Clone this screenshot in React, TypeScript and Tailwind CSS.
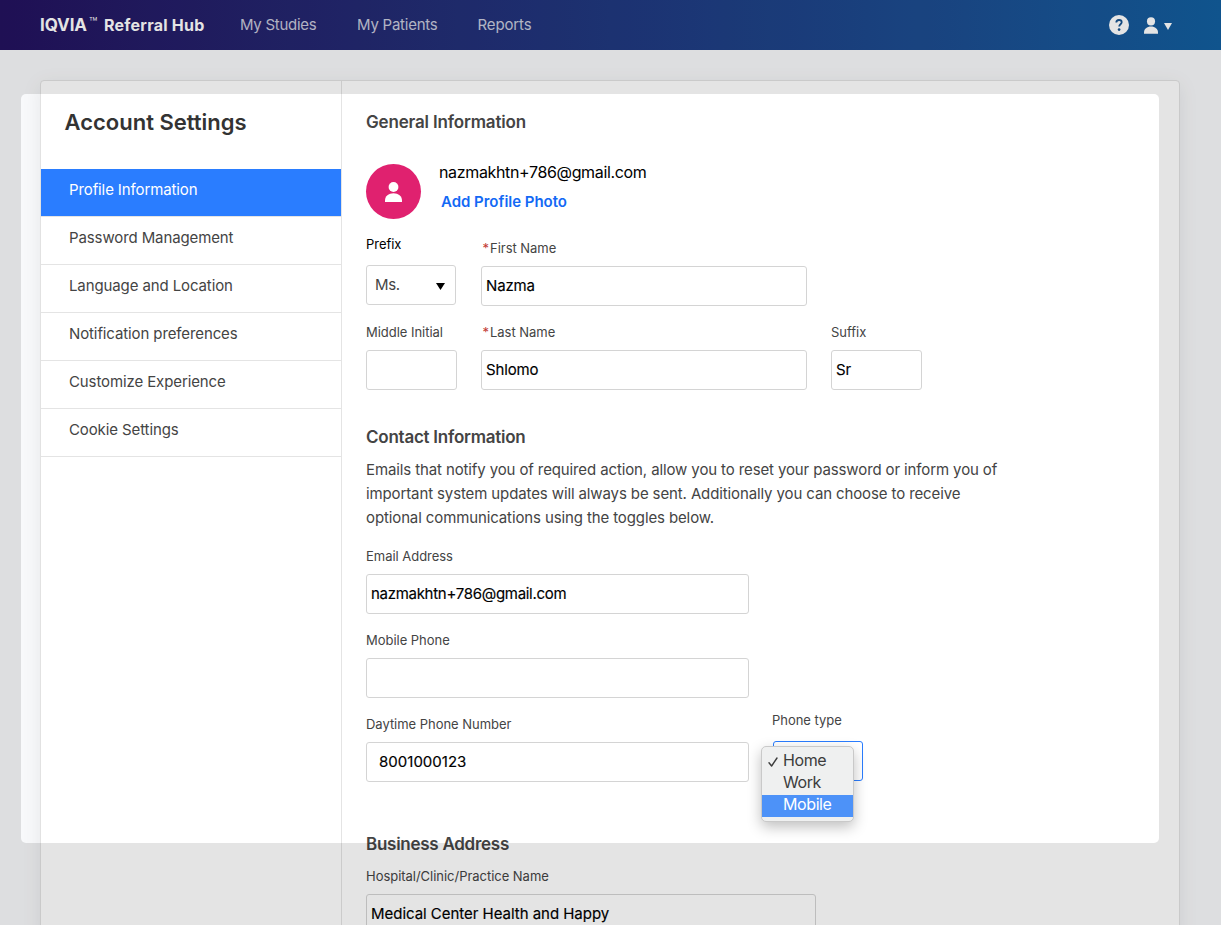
import React from "react";

const navLinks = [
  { label: "My Studies", style: "ml-[35.5px] tracking-[-0.265px]" },
  { label: "My Patients", style: "ml-[40.5px] tracking-[-0.236px]" },
  { label: "Reports", style: "ml-[40px] tracking-[-0.13px]" },
];

const menu = [
  { label: "Profile Information", active: true },
  { label: "Password Management" },
  { label: "Language and Location" },
  { label: "Notification preferences" },
  { label: "Customize Experience" },
  { label: "Cookie Settings" },
];

function PersonIcon({ className }: { className: string }) {
  return (
    <svg viewBox="0 0 17 20" className={className} fill="currentColor" aria-hidden="true">
      <circle cx="8.5" cy="5" r="4.9" />
      <path d="M0 20v-1.6C0 14.300 3.600 11.200 8.500 11.200s8.500 3.100 8.500 7.200V20z" />
    </svg>
  );
}

function Caret({ className }: { className: string }) {
  return (
    <svg viewBox="0 0 8 7" preserveAspectRatio="none" className={className} fill="currentColor" aria-hidden="true">
      <path d="M0 0h8L4 7z" />
    </svg>
  );
}

function Label({ children, required, className = "" }: { children: React.ReactNode; required?: boolean; className?: string }) {
  return (
    <div className={`flex h-[19px] items-center whitespace-nowrap text-[13px] leading-[19px] tracking-[-0.03px] text-[#444] ${className}`}>
      {required && <span className="w-[9px] pl-[1.5px] text-[13px] text-[#c23934]">*</span>}
      <span>{children}</span>
    </div>
  );
}

function Field({
  label,
  value = "",
  required,
  className = "",
  inputClass = "pl-1 tracking-[-0.15px]",
}: {
  label: string;
  value?: string;
  required?: boolean;
  className?: string;
  inputClass?: string;
}) {
  return (
    <div className={`flex shrink-0 flex-col gap-2 ${className}`}>
      <Label required={required}>{label}</Label>
      <div className={`flex h-10 items-center whitespace-nowrap rounded-[3px] border border-[#d4d4d4] text-[15px] leading-5 text-black [-webkit-text-stroke:0.15px_black] ${inputClass}`}>
        {value}
      </div>
    </div>
  );
}

function Heading({ children, className }: { children: React.ReactNode; className: string }) {
  return <h2 className={`whitespace-nowrap text-[17px] font-semibold text-[#444] ${className}`}>{children}</h2>;
}

export default function App() {
  return (
    <div className="relative flex h-[925px] w-[1221px] flex-col overflow-hidden bg-[#f8f9fb] font-['Inter','Liberation_Sans',sans-serif]">
      <header className="flex h-[50px] shrink-0 items-center bg-linear-to-r from-[#23125f] via-[#20387f] to-[#125e9e] pl-10 pr-[49px] text-white">
        <div className="flex items-center whitespace-nowrap font-bold leading-5">
          <span className="text-[17px] tracking-[-0.1px]">IQVIA</span>
          <span className="ml-[2px] flex h-5 w-[15px] items-start text-[14px] font-light leading-[16px]">™</span>
          <span className="text-[16px] tracking-[0.23px]">Referral Hub</span>
        </div>
        <nav className="flex items-center whitespace-nowrap text-[15px] text-white/75">
          {navLinks.map((l) => (
            <span key={l.label} className={l.style}>{l.label}</span>
          ))}
        </nav>
        <div className="ml-auto flex items-center">
          <svg viewBox="0 0 20 20" className="h-5 w-5" aria-hidden="true">
            <circle cx="10" cy="10" r="10" fill="#fff" />
            <path d="M7.300 7.600C7.300 5.900 8.500 5 10 5s2.700.9 2.700 2.300c0 1.900-2.500 2-2.500 4.200" fill="none" stroke="#17538f" strokeWidth="1.8" />
            <circle cx="10.100" cy="14.600" r="1.350" fill="#17538f" />
          </svg>
          <PersonIcon className="ml-[15px] h-[17px] w-[14px]" />
          <Caret className="ml-[6px] mt-[3px] h-[7px] w-2" />
        </div>
      </header>

      <div className="mx-10 mt-[30px] flex h-[860px] w-[1140px] shrink-0 rounded-[4px] border border-[#e2e2e2] bg-white shadow-[0_4px_20px_rgba(0,0,0,0.08)]">
        <aside className="w-[301px] shrink-0 border-r border-[#e4e4e4]">
          <h1 className="h-[88px] whitespace-nowrap pl-[23.5px] pt-[26px] text-[22px] font-semibold leading-[30px] text-[#333]">Account Settings</h1>
          {menu.map((m) => (
            <div
              key={m.label}
              className={`h-12 whitespace-nowrap border-b border-[#e4e4e4] pl-7 pt-[11px] text-[15px] leading-5 tracking-[-0.11px] ${m.active ? "bg-[#2a7dff] bg-clip-padding text-white" : "text-[#444]"}`}
            >
              {m.label}
            </div>
          ))}
        </aside>

        <main className="flex flex-col pl-6 pt-[29px]">
          <Heading className="h-6 leading-6 tracking-[-0.167px]">General Information</Heading>
          <div className="mt-[30px] flex">
            <span className="flex h-[55px] w-[55px] items-center justify-center rounded-full bg-[#e0216f] text-white">
              <PersonIcon className="h-5 w-[17px]" />
            </span>
            <div className="ml-[18px] whitespace-nowrap">
              <div className="h-[18px] text-[16px] leading-4 tracking-[-0.35px] text-black">nazmakhtn+786@gmail.com</div>
              <div className="ml-[2px] mt-[10px] h-5 text-[15px] font-semibold leading-5 tracking-[-0.02px] text-[#1369f5]">Add Profile Photo</div>
            </div>
          </div>

          <div className="mt-4 flex">
            <div className="w-[90px]">
              <Label>
                <span className="text-black">Prefix</span>
              </Label>
              <div className="mt-[11px] flex h-10 items-center justify-between rounded-[3px] border border-[#d4d4d4] pl-2 pr-[10px] text-[15px] tracking-[-0.4px] text-[#444]">
                Ms.
                <Caret className="mt-[3px] h-[7px] w-[9px] text-black" />
              </div>
            </div>
            <Field label="First Name" value="Nazma" required className="ml-[25px] mt-1 w-[326px]" />
          </div>

          <div className="mt-[17px] flex">
            <Field label="Middle Initial" className="w-[91px]" />
            <Field label="Last Name" value="Shlomo" required className="ml-6 w-[326px]" />
            <Field label="Suffix" value="Sr" className="ml-6 w-[91px]" />
          </div>

          <Heading className="mt-[35px] h-[25px] leading-[25px] tracking-[-0.245px]">Contact Information</Heading>
          <p className="mt-2 whitespace-nowrap text-[15px] leading-6 tracking-[-0.117px] text-[#444]">
            Emails that notify you of required action, allow you to reset your password or inform you of
            <br />
            important system updates will always be sent. Additionally you can choose to receive
            <br />
            optional communications using the toggles below.
          </p>

          <Field label="Email Address" value="nazmakhtn+786@gmail.com" className="mt-[17px] w-[383px]" inputClass="pl-1 tracking-[-0.29px]" />
          <Field label="Mobile Phone" className="mt-[17px] w-[383px]" />

          <div className="mt-[13px] flex">
            <Field label="Daytime Phone Number" value="8001000123" className="mt-1 w-[383px]" inputClass="pl-3 tracking-[0.02px]" />
            <div className="relative ml-6 w-[90px]">
              <Label className="-ml-px">Phone type</Label>
              <div className="mt-[11px] h-10 rounded-[3px] border border-[#2a7dff]" />
              <ul className="absolute -left-[12px] top-[35px] h-[76px] w-[93px] whitespace-nowrap rounded-[5px] border border-[#c9c9c9] bg-[#eff0f0] pt-1 text-[16px] tracking-[-0.4px] text-[#3c3c3c] shadow-[0_5px_14px_rgba(0,0,0,0.25)]">
                <li className="flex h-[22px] items-start leading-[19px]">
                  <svg viewBox="0 0 10 10" className="ml-[6px] mr-[5px] mt-[6px] h-[10px] w-[10px]" fill="none" stroke="currentColor" strokeWidth="1.4" strokeLinecap="round" strokeLinejoin="round" aria-hidden="true">
                    <path d="M1 5.700L3.600 9 9 1" />
                  </svg>
                  Home
                </li>
                <li className="h-[22px] pl-[21px] leading-[19px]">Work</li>
                <li className="h-[22px] bg-[#4d92f8] pl-[21px] leading-[19px] text-white">Mobile</li>
              </ul>
            </div>
          </div>

          <Heading className="mt-[51px] h-[23px] leading-[23px] tracking-[-0.265px]">Business Address</Heading>
          <Field label="Hospital/Clinic/Practice Name" value="Medical Center Health and Happy" className="mt-[11px] w-[450px]" inputClass="pl-1 tracking-[-0.03px]" />
        </main>
      </div>

      <div className="pointer-events-none absolute left-[21px] top-[94px] h-[749px] w-[1138px] rounded-[5px] shadow-[0_0_0_1300px_rgba(0,0,0,0.106)]" />
    </div>
  );
}
